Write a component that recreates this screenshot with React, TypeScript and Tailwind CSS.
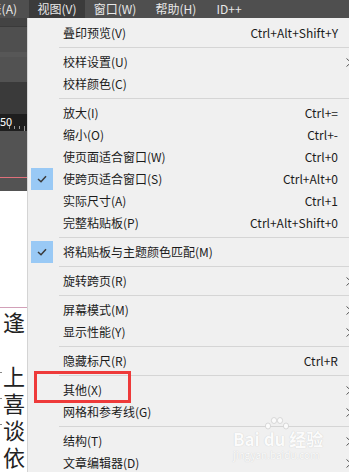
import React from 'react'

type Item =
  | { sep: true }
  | { sep?: false; label: string; shortcut?: string; checked?: boolean; sub?: boolean }

const items: Item[] = [
  { label: '叠印预览(V)', shortcut: 'Ctrl+Alt+Shift+Y' },
  { sep: true },
  { label: '校样设置(U)', sub: true },
  { label: '校样颜色(C)' },
  { sep: true },
  { label: '放大(I)', shortcut: 'Ctrl+=' },
  { label: '缩小(O)', shortcut: 'Ctrl+-' },
  { label: '使页面适合窗口(W)', shortcut: 'Ctrl+0' },
  { label: '使跨页适合窗口(S)', shortcut: 'Ctrl+Alt+0', checked: true },
  { label: '实际尺寸(A)', shortcut: 'Ctrl+1' },
  { label: '完整粘贴板(P)', shortcut: 'Ctrl+Alt+Shift+0' },
  { sep: true },
  { label: '将粘贴板与主题颜色匹配(M)', checked: true },
  { sep: true },
  { label: '旋转跨页(R)', sub: true },
  { sep: true },
  { label: '屏幕模式(M)', sub: true },
  { label: '显示性能(Y)', sub: true },
  { sep: true },
  { label: '隐藏标尺(R)', shortcut: 'Ctrl+R' },
  { sep: true },
  { label: '其他(X)', sub: true },
  { label: '网格和参考线(G)', sub: true },
  { sep: true },
  { label: '结构(T)', sub: true },
  { label: '文章编辑器(D)', sub: true },
]

function Check() {
  return (
    <div className="flex h-[22px] w-[22px] items-center justify-center bg-[#99c9f5]">
      <svg width="10" height="8" viewBox="0 0 10 8">
        <path d="M1 4 L4 6.8 L9 1.2" fill="none" stroke="#3a3a3a" strokeWidth="1.5" />
      </svg>
    </div>
  )
}

function Arrow() {
  return (
    <svg width="6" height="9" viewBox="0 0 6 9" className="shrink-0">
      <path d="M3.5 0.5 L8 4.5 L3.5 8.5" fill="none" stroke="#555" strokeWidth="1" />
    </svg>
  )
}

function MenuBar() {
  return (
    <div className="flex h-[18px] items-center bg-[#4f4f4f] text-[12px] leading-[18px] text-[#e8e8e8]">
      <div className="w-[29px] shrink-0 whitespace-nowrap pr-[12px] text-right">
        <span className="ml-[-20px]">表(A)</span>
      </div>
      <div className="h-[18px] w-[56px] shrink-0 bg-[#3b3b3b] text-center">视图(V)</div>
      <div className="w-[60px] shrink-0 text-center">窗口(W)</div>
      <div className="w-[62px] shrink-0 text-center">帮助(H)</div>
      <div className="w-[44px] shrink-0 text-center">ID++</div>
    </div>
  )
}

function Canvas() {
  return (
    <div className="flex w-[27px] shrink-0 flex-col">
      <div className="h-[8px] bg-[#434343]" />
      <div className="h-[1px] bg-[#3a3a3a]" />
      <div className="h-[25px] bg-[#4f4f4f]" />
      <div className="h-[5px] bg-[#575757]" />
      <div className="h-[25px] bg-[#525252]" />
      <div className="h-[32px] bg-[#3a3a3a]" />
      <div className="relative h-[17px] bg-[#1e1e1e]">
        <span className="absolute left-[0px] top-[0px] text-[11px] leading-[14px] text-white">50</span>
        <div className="absolute bottom-0 left-0 flex gap-[4px] pl-[9px]">
          <div className="h-[3px] w-[1px] bg-[#999]" />
          <div className="h-[3px] w-[1px] bg-[#999]" />
          <div className="h-[3px] w-[1px] bg-[#999]" />
          <div className="h-[5px] w-[1px] bg-[#999]" />
        </div>
      </div>
      <div className="flex h-[60px] flex-col bg-[#535353]">
        <div className="h-[46px]" />
        <div className="h-[1px] bg-[#e0707a]" />
      </div>
      <div className="flex flex-1 flex-col bg-white">
        <div className="h-[116px]" />
        <div className="h-[1px] bg-[#d2a0b8]" />
        <div className="flex">
          <div className="mt-[8px] flex w-[2px] shrink-0 flex-col gap-[25px] pt-[56px]">
            <div className="h-[1px] w-[2px] bg-[#888]" />
            <div className="h-[1px] w-[2px] bg-[#888]" />
            <div className="h-[1px] w-[2px] bg-[#888]" />
          </div>
          <div className="ml-[1px] flex flex-col text-[22px] leading-[27px] text-[#222]">
            <span>逢</span>
            <span>&nbsp;</span>
            <span>上</span>
            <span>喜</span>
            <span>谈</span>
            <span>依</span>
          </div>
        </div>
      </div>
    </div>
  )
}

function Menu() {
  return (
    <div className="flex-1 border-l border-[#d4d4d4] bg-[#f0f0f0] pt-[4px] text-[12px] text-[#1b1b1b]">
      {items.map((it, i) =>
        it.sep ? (
          <div key={i} className="flex h-[7px] items-center pl-[31px]">
            <div className="h-[1px] w-full bg-[#d5d5d5]" />
          </div>
        ) : (
          <div key={i} className="flex h-[22px] items-center leading-[22px]">
            <div className="w-[35px] shrink-0 pl-[3px]">{it.checked && <Check />}</div>
            <div className="flex-1 whitespace-nowrap">{it.label}</div>
            <div className="whitespace-nowrap pr-[5px]">{it.shortcut}</div>
            <div className="w-[6px] shrink-0">{it.sub && <Arrow />}</div>
          </div>
        ),
      )}
    </div>
  )
}

function Watermark() {
  return (
    <div className="pointer-events-none absolute left-[233px] top-[416px] w-[90px] text-[#fbfbfb] [text-shadow:0_0_1px_#c4c4c4]">
      <svg width="26" height="14" viewBox="0 0 26 14" className="ml-[31px]">
        <g fill="#fbfbfb" stroke="#cfcfcf" strokeWidth="0.8">
          <ellipse cx="4" cy="10" rx="2.6" ry="3" />
          <ellipse cx="10" cy="4.5" rx="2.6" ry="3" />
          <ellipse cx="16" cy="4.5" rx="2.6" ry="3" />
          <ellipse cx="22" cy="10" rx="2.6" ry="3" />
        </g>
      </svg>
      <div className="whitespace-nowrap text-[17px] font-bold leading-[18px]">Bai du 经验</div>
      <div className="whitespace-nowrap text-[10px] leading-[14px]">jingyan.baidu.com</div>
    </div>
  )
}

export default function App() {
  return (
    <div
      className="relative h-[472px] w-[349px] overflow-hidden bg-white"
      style={{ fontFamily: '"Noto Sans CJK SC", "Noto Sans", sans-serif' }}
    >
      <MenuBar />
      <div className="flex h-[454px]">
        <Canvas />
        <Menu />
      </div>
      <Watermark />
      <div className="absolute left-[34px] top-[371px] h-[32px] w-[97px] border-[3px] border-[#ee3a3a]" />
    </div>
  )
}
